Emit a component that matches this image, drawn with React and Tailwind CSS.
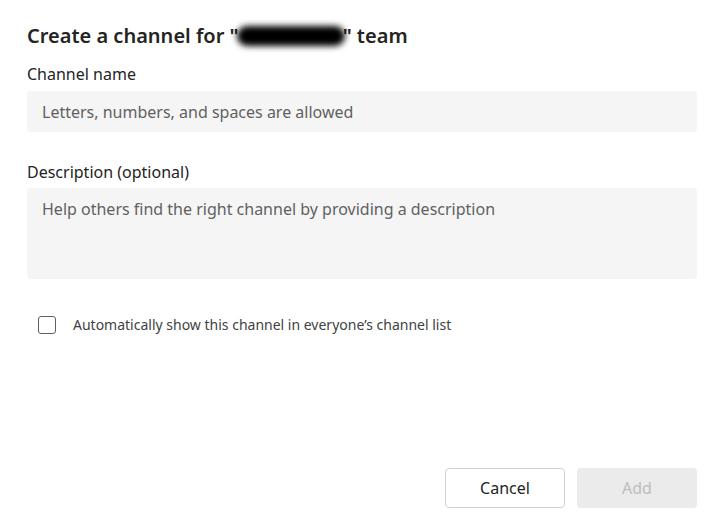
import React, { useState } from 'react';

export default function App() {
  const [autoShow, setAutoShow] = useState(false);

  return (
    <div className="w-[716px] h-[518px] bg-white flex flex-col text-[#242424]" style={{ fontFamily: '"Noto Sans", "Open Sans", sans-serif' }}>
      <div className="flex flex-col pl-[27px] pr-[19px] pt-[22px]">
        <h1 className="text-[20px] font-semibold leading-[28px]">
          Create a channel for "
          <span className="relative inline-block align-middle w-[108px] h-[24px] -mx-[2px] -mt-[4px]">
            <span className="absolute inset-x-0 inset-y-[2px] bg-black rounded-full blur-[3px]" />
          </span>
          " team
        </h1>

        <label className="mt-[13px] text-[16px] leading-[22px]">Channel name</label>
        <input
          type="text"
          placeholder="Letters, numbers, and spaces are allowed"
          className="mt-[6px] h-[41px] w-full rounded-[4px] bg-[#f5f5f5] px-[15px] text-[16px] outline-none placeholder:text-[#616161]"
        />

        <label className="mt-[29px] text-[16px] leading-[22px]">Description (optional)</label>
        <textarea
          placeholder="Help others find the right channel by providing a description"
          className="mt-[5px] h-[91px] w-full resize-none rounded-[4px] bg-[#f5f5f5] px-[15px] py-[9px] text-[16px] outline-none placeholder:text-[#616161]"
        />

        <label className="mt-[35px] ml-[11px] flex items-center gap-[17px] text-[14px] text-[#424242] cursor-pointer">
          <span
            onClick={() => setAutoShow(!autoShow)}
            className="w-[18px] h-[18px] rounded-[3px] border border-[#616161] bg-white flex items-center justify-center"
          >
            {autoShow && (
              <svg width="12" height="12" viewBox="0 0 12 12" fill="none">
                <path d="M2 6.5l2.5 2.5L10 3.5" stroke="#424242" strokeWidth="1.3" />
              </svg>
            )}
          </span>
          Automatically show this channel in everyone’s channel list
        </label>
      </div>

      <div className="mt-auto flex justify-end gap-[12px] px-[19px] pb-[10px]">
        <button className="w-[120px] h-[40px] rounded-[4px] border border-[#d1d1d1] bg-white text-[16px] text-[#242424]">
          Cancel
        </button>
        <button disabled className="w-[120px] h-[40px] rounded-[4px] bg-[#ebebeb] text-[16px] text-[#bdbdbd]">
          Add
        </button>
      </div>
    </div>
  );
}
